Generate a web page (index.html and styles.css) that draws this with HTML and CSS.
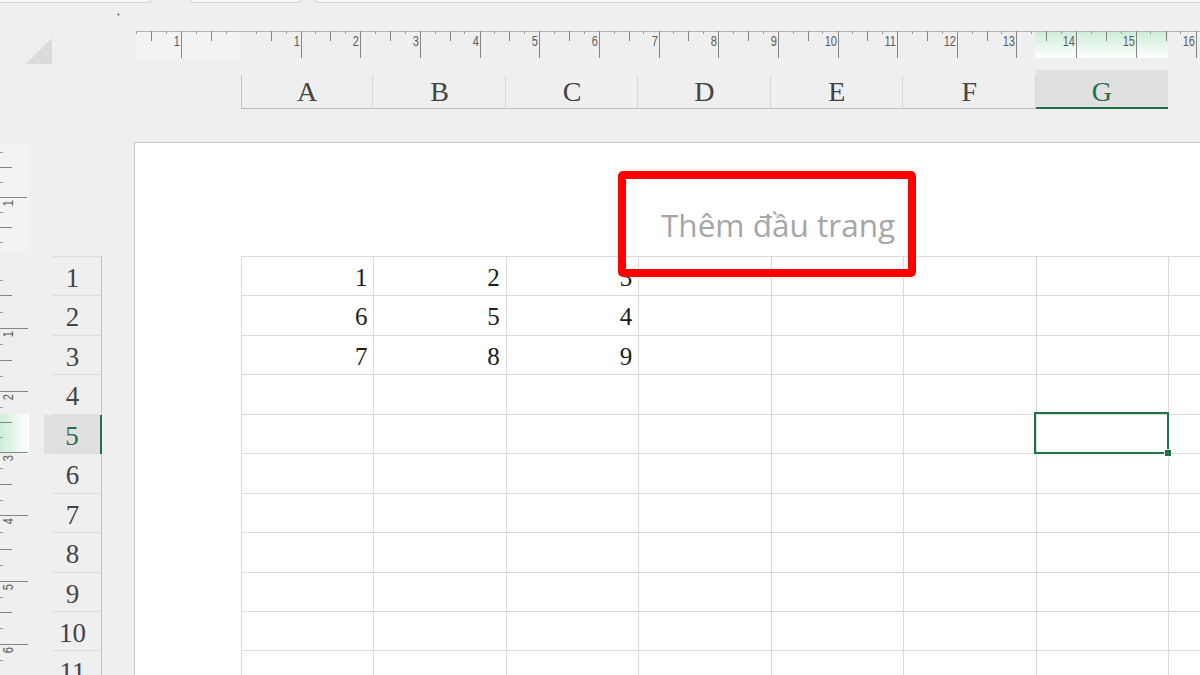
FILE: index.html
```html
<!DOCTYPE html>
<html lang="vi">
<head>
<meta charset="utf-8">
<title>Thêm đầu trang</title>
<link rel="stylesheet" href="styles.css">
</head>
<body>
<div class="tabs"><span class="tab tab-1"></span><span class="tab tab-2"></span><span class="tab tab-3"></span></div>
<div class="top">
  <div class="corner">
    <svg width="136" height="139" viewBox="0 3 136 139">
      <circle cx="118.5" cy="14.5" r="1" fill="#555"/>
      <polygon points="26,64 52,64 52,38" fill="#dadada"/>
    </svg>
  </div>
  <div class="top-right">
    <div class="hruler">
      <svg width="1064" height="57" viewBox="136 3 1064 57">
        <defs>
          <linearGradient id="gh" x1="0" y1="0" x2="0" y2="1">
            <stop offset="0" stop-color="#cdeed8"/>
            <stop offset="1" stop-color="#ffffff"/>
          </linearGradient>
        </defs>
        <rect x="136" y="31" width="105" height="27" fill="#f3f3f3"/>
        <rect x="1035" y="32" width="133" height="26" fill="url(#gh)"/>
        <path d="M136 31.5H1200" stroke="#b4b4b4" stroke-width="1"/>
        <path stroke="#858585" stroke-width="1" d="M181.5 31V58M301.5 31V58M360.5 31V58M420.5 31V58M480.5 31V58M539.5 31V58M599.5 31V58M659.5 31V58M718.5 31V58M778.5 31V58M838.5 31V58M897.5 31V58M957.5 31V58M1016.5 31V58M1076.5 31V58M1136.5 31V58M1196.5 31V58"/>
        <path stroke="#858585" stroke-width="1" d="M151.5 31V41M211.5 31V41M271.5 31V41M330.5 31V41M390.5 31V41M450.5 31V41M509.5 31V41M569.5 31V41M629.5 31V41M688.5 31V41M748.5 31V41M808.5 31V41M867.5 31V41M927.5 31V41M987.5 31V41M1046.5 31V41M1106.5 31V41M1166.5 31V41"/>
        <path stroke="#9a9a9a" stroke-width="1" d="M136.5 31V34M166.5 31V34M196.5 31V34M226.5 31V34M256.5 31V34M286.5 31V34M315.5 31V34M345.5 31V34M375.5 31V34M405.5 31V34M435.5 31V34M464.5 31V34M494.5 31V34M524.5 31V34M554.5 31V34M584.5 31V34M614.5 31V34M643.5 31V34M673.5 31V34M703.5 31V34M733.5 31V34M763.5 31V34M793.5 31V34M822.5 31V34M852.5 31V34M882.5 31V34M912.5 31V34M942.5 31V34M972.5 31V34M1001.5 31V34M1031.5 31V34M1061.5 31V34M1091.5 31V34M1121.5 31V34M1150.5 31V34M1180.5 31V34"/>
        <g class="rnum">
          <text transform="translate(180 46) scale(0.74 1)">1</text>
          <text transform="translate(300 46) scale(0.74 1)">1</text>
          <text transform="translate(359 46) scale(0.74 1)">2</text>
          <text transform="translate(419 46) scale(0.74 1)">3</text>
          <text transform="translate(479 46) scale(0.74 1)">4</text>
          <text transform="translate(538 46) scale(0.74 1)">5</text>
          <text transform="translate(598 46) scale(0.74 1)">6</text>
          <text transform="translate(658 46) scale(0.74 1)">7</text>
          <text transform="translate(717 46) scale(0.74 1)">8</text>
          <text transform="translate(777 46) scale(0.74 1)">9</text>
          <text transform="translate(837 46) scale(0.74 1)">10</text>
          <text transform="translate(896 46) scale(0.74 1)">11</text>
          <text transform="translate(956 46) scale(0.74 1)">12</text>
          <text transform="translate(1015 46) scale(0.74 1)">13</text>
          <text transform="translate(1075 46) scale(0.74 1)">14</text>
          <text transform="translate(1135 46) scale(0.74 1)">15</text>
          <text transform="translate(1195 46) scale(0.74 1)">16</text>
        </g>
      </svg>
    </div>
    <div class="colheads">
      <div class="ch ch-first">A</div>
      <div class="ch">B</div>
      <div class="ch">C</div>
      <div class="ch">D</div>
      <div class="ch">E</div>
      <div class="ch">F</div>
      <div class="ch sel">G</div>
    </div>
  </div>
</div>
<div class="main">
  <div class="vruler">
    <svg width="29" height="533" viewBox="0 142 29 533">
      <defs>
        <linearGradient id="gv" x1="0" y1="0" x2="1" y2="0">
          <stop offset="0" stop-color="#cdeed8"/>
          <stop offset="1" stop-color="#ffffff"/>
        </linearGradient>
      </defs>
      <rect x="0" y="143" width="29" height="107" fill="#f3f3f3"/>
      <rect x="0" y="414" width="29" height="40" fill="url(#gv)"/>
      <path stroke="#858585" stroke-width="1" d="M0 197.5H27M0 328.5H28M0 391.5H28M0 452.5H28M0 515.5H28M0 581.5H28M0 644.5H28"/>
      <path stroke="#858585" stroke-width="1" d="M0 167.5H12M0 227.5H12M0 295.5H12M0 360.5H12M0 422.5H12M0 484.5H12M0 549.5H12M0 612.5H12"/>
      <path stroke="#9a9a9a" stroke-width="1" d="M0 152.5H3M0 182.5H3M0 212.5H3M0 242.5H3M0 280.5H3M0 312.5H3M0 344.5H3M0 376.5H3M0 407.5H3M0 437.5H3M0 468.5H3M0 500.5H3M0 532.5H3M0 565.5H3M0 597.5H3M0 628.5H3M0 660.5H3"/>
      <g class="rnum vnum">
        <text transform="translate(13 200) rotate(-90) scale(0.74 1)">1</text>
        <text transform="translate(13 331) rotate(-90) scale(0.74 1)">1</text>
        <text transform="translate(13 394) rotate(-90) scale(0.74 1)">2</text>
        <text transform="translate(13 455) rotate(-90) scale(0.74 1)">3</text>
        <text transform="translate(13 518) rotate(-90) scale(0.74 1)">4</text>
        <text transform="translate(13 584) rotate(-90) scale(0.74 1)">5</text>
        <text transform="translate(13 647) rotate(-90) scale(0.74 1)">6</text>
      </g>
    </svg>
  </div>
  <div class="rowheads">
    <div class="rh rh-first">1</div>
    <div class="rh">2</div>
    <div class="rh">3</div>
    <div class="rh">4</div>
    <div class="rh sel">5</div>
    <div class="rh">6</div>
    <div class="rh">7</div>
    <div class="rh">8</div>
    <div class="rh">9</div>
    <div class="rh">10</div>
    <div class="rh">11</div>
  </div>
  <div class="page">
    <div class="page-head">
      <div class="head-text">Thêm đầu trang</div>
      <div class="annot"></div>
    </div>
    <div class="sheet">
      <div class="c">1</div><div class="c">2</div><div class="c">3</div><div class="c"></div><div class="c"></div><div class="c"></div><div class="c"></div><div class="c"></div>
      <div class="c">6</div><div class="c">5</div><div class="c">4</div><div class="c"></div><div class="c"></div><div class="c"></div><div class="c"></div><div class="c"></div>
      <div class="c">7</div><div class="c">8</div><div class="c">9</div><div class="c"></div><div class="c"></div><div class="c"></div><div class="c"></div><div class="c"></div>
      <div class="c"></div><div class="c"></div><div class="c"></div><div class="c"></div><div class="c"></div><div class="c"></div><div class="c"></div><div class="c"></div>
      <div class="c"></div><div class="c"></div><div class="c"></div><div class="c"></div><div class="c"></div><div class="c"></div><div class="c active"><div class="sel-box"><span class="handle"></span></div></div><div class="c"></div>
      <div class="c"></div><div class="c"></div><div class="c"></div><div class="c"></div><div class="c"></div><div class="c"></div><div class="c"></div><div class="c"></div>
      <div class="c"></div><div class="c"></div><div class="c"></div><div class="c"></div><div class="c"></div><div class="c"></div><div class="c"></div><div class="c"></div>
      <div class="c"></div><div class="c"></div><div class="c"></div><div class="c"></div><div class="c"></div><div class="c"></div><div class="c"></div><div class="c"></div>
      <div class="c"></div><div class="c"></div><div class="c"></div><div class="c"></div><div class="c"></div><div class="c"></div><div class="c"></div><div class="c"></div>
      <div class="c"></div><div class="c"></div><div class="c"></div><div class="c"></div><div class="c"></div><div class="c"></div><div class="c"></div><div class="c"></div>
      <div class="c"></div><div class="c"></div><div class="c"></div><div class="c"></div><div class="c"></div><div class="c"></div><div class="c"></div><div class="c"></div>
    </div>
  </div>
</div>
</body>
</html>
```

FILE: styles.css
```css
* { box-sizing: border-box; }
html, body { margin: 0; padding: 0; }
body {
  width: 1200px;
  height: 675px;
  overflow: hidden;
  background: #efefef;
  font-family: "Liberation Serif", "Times New Roman", serif;
  color: #444;
}

/* top strip of tabs */
.tabs { display: flex; height: 3px; }
.tab {
  display: block;
  height: 3px;
  background: #fafafa;
  border: 1px solid #d3d3d3;
  border-top: 0;
  border-radius: 0 0 3px 3px;
}
.tab-1 { width: 151px; border-left: 0; border-radius: 0 0 3px 0; }
.tab-2 { width: 110px; margin-left: 40px; }
.tab-3 { flex: 1; margin-left: 14px; border-right: 0; border-radius: 0 0 0 3px; }

/* rulers + column headers */
.top { display: flex; height: 139px; }
.corner { width: 136px; flex: none; }
.corner svg, .hruler svg, .vruler svg { display: block; }
.top-right { flex: 1; display: flex; flex-direction: column; }
.hruler { height: 57px; }

.rnum text {
  font-family: "Liberation Sans", Arial, sans-serif;
  font-size: 15px;
  fill: #5c5c5c;
  text-anchor: end;
}

.colheads {
  display: flex;
  margin-top: 10px;
  padding-left: 105px;
  height: 39px;
}
.ch {
  width: 132.43px;
  height: 39px;
  flex: none;
  border-bottom: 1px solid #bcbcbc;
  text-align: center;
  font-size: 28px;
  line-height: 35px;
  padding-top: 4px;
  color: #444;
  background: linear-gradient(#d8d8d8, #d8d8d8) no-repeat right 0 top 5px / 1px 34px;
}
.ch-first {
  background:
    linear-gradient(#c4c4c4, #c4c4c4) no-repeat left 0 top 5px / 1px 34px,
    linear-gradient(#d8d8d8, #d8d8d8) no-repeat right 0 top 5px / 1px 34px;
}
.ch.sel {
  background: #e0e0e0;
  border-bottom: 2px solid #217346;
  color: #24704a;
}

/* main area */
.main { display: flex; height: 533px; }
.vruler { width: 29px; flex: none; }

.rowheads {
  width: 58px;
  flex: none;
  margin-left: 15px;
  padding-top: 114px;
}
.rh {
  height: 39.45px;
  border-right: 1px solid #c3c3c3;
  text-align: center;
  font-size: 27px;
  line-height: 34px;
  padding-top: 4px;
  color: #444;
  background: linear-gradient(#dcdcdc, #dcdcdc) no-repeat left 9px bottom 0 / calc(100% - 9px) 1px;
}
.rh-first {
  height: 40.45px;
  padding-top: 5px;
  background:
    linear-gradient(#dcdcdc, #dcdcdc) no-repeat left 9px top 0 / calc(100% - 9px) 1px,
    linear-gradient(#dcdcdc, #dcdcdc) no-repeat left 9px bottom 0 / calc(100% - 9px) 1px;
}
.rh.sel {
  background-color: #e0e0e0;
  border-right: 2px solid #217346;
  color: #24704a;
}

/* white page */
.page {
  flex: 1;
  min-width: 0;
  margin-left: 32px;
  background: #fff;
  border-top: 1px solid #c8c8c8;
  border-left: 1px solid #c8c8c8;
  overflow: hidden;
}
.page-head {
  position: relative;
  height: 113px;
  padding: 62px 0 0 526px;
}
.head-text {
  font-family: "Open Sans", "Noto Sans", sans-serif;
  font-size: 31.5px;
  line-height: 40px;
  color: #a6a6a6;
  white-space: nowrap;
}
.annot {
  position: absolute;
  left: 483px;
  top: 28px;
  width: 298px;
  height: 106px;
  border: 8px solid #fe0000;
  border-radius: 5px;
  z-index: 2;
}

.sheet {
  display: grid;
  grid-template-columns: repeat(8, 132.43px);
  grid-auto-rows: 39.45px;
  width: max-content;
  margin-left: 106px;
  border-top: 1px solid #dadada;
  border-left: 1px solid #dadada;
}
.c {
  border-right: 1px solid #dadada;
  border-bottom: 1px solid #dadada;
  text-align: right;
  padding: 4px 6px 0 0;
  font-size: 25px;
  line-height: 33px;
  color: #1c1c1c;
}
.c.active { position: relative; }
.sel-box {
  position: absolute;
  left: -3px;
  top: -3px;
  right: -1px;
  bottom: -1px;
  border: 2px solid #217346;
  z-index: 1;
}
.handle {
  position: absolute;
  right: -5px;
  bottom: -5px;
  width: 8px;
  height: 8px;
  background: #217346;
  border: 1px solid #fff;
}
```
